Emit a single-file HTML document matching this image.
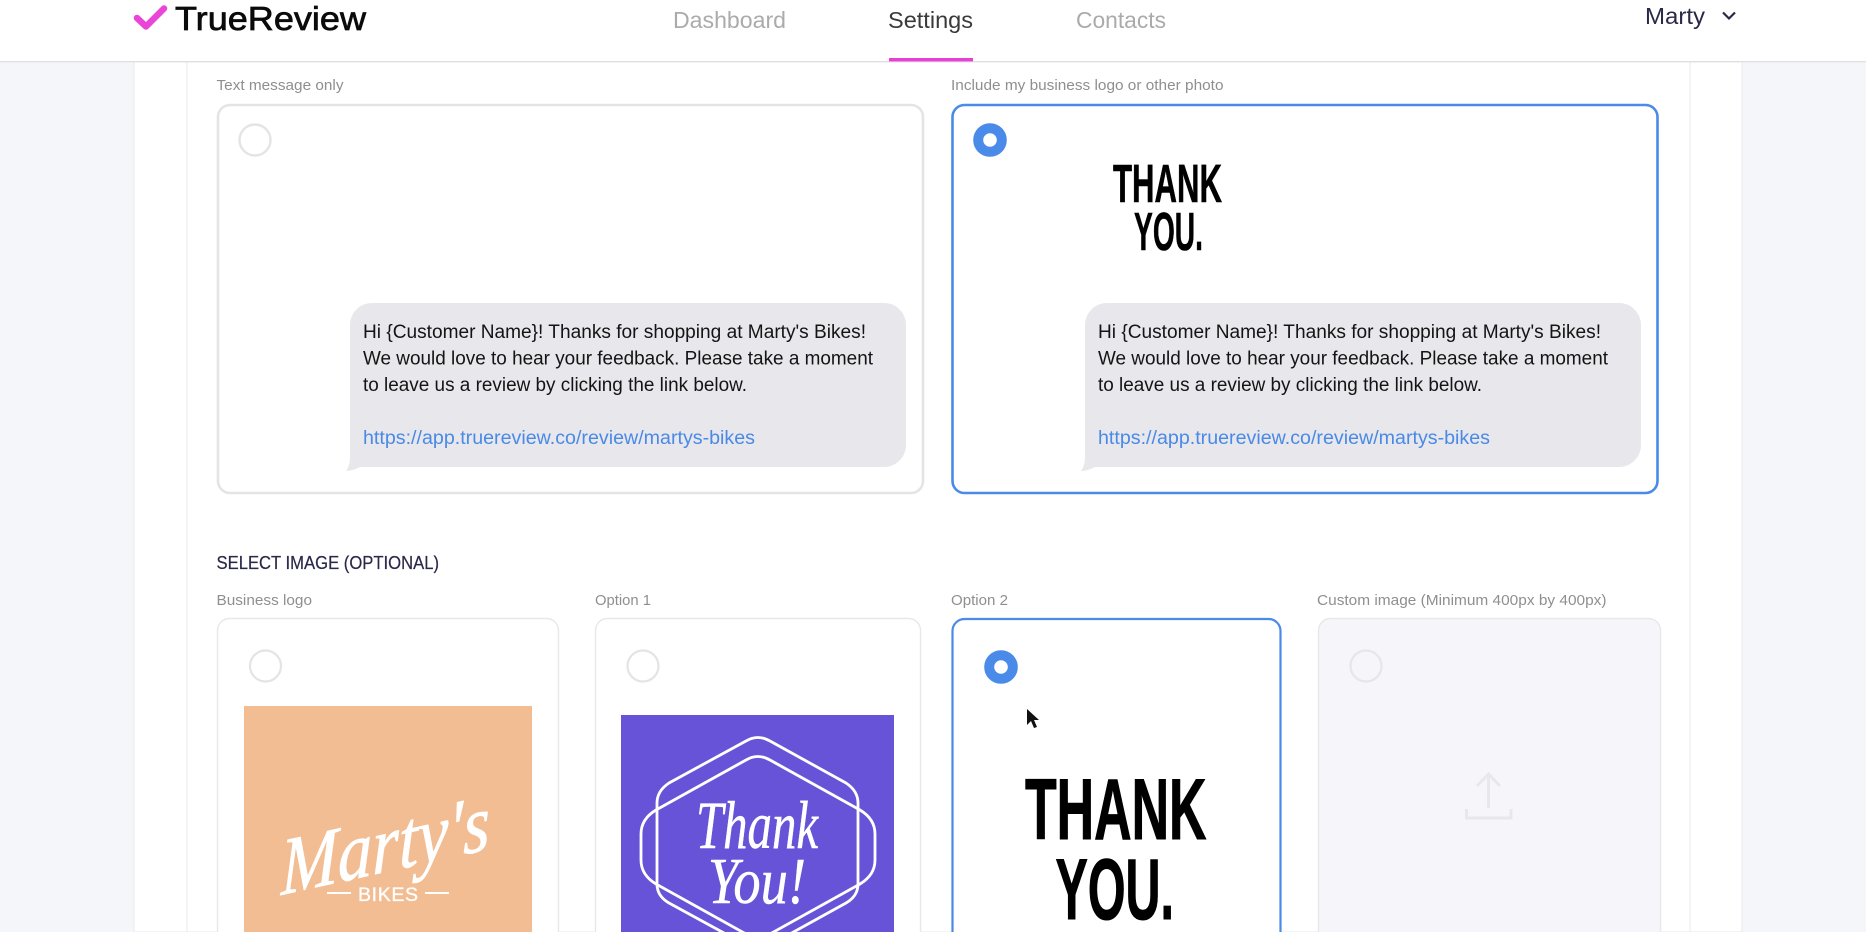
<!DOCTYPE html>
<html lang="en">
<head>
<meta charset="utf-8">
<title>TrueReview Settings</title>
<style>
html,body{margin:0;padding:0;width:1866px;height:932px;overflow:hidden;background:#f5f6fa}
svg{display:block;position:absolute;left:0;top:0;font-family:"Liberation Sans",sans-serif;filter:blur(.3px)}
</style>
</head>
<body>
<svg width="1866" height="932" viewBox="0 0 1866 932" xmlns="http://www.w3.org/2000/svg">
  <rect width="1866" height="932" fill="#f5f6fa"/>
  <rect x="134" y="62" width="1608" height="870" fill="#fff" stroke="#e9e9ee" stroke-width="1"/>
  <line x1="187" y1="62" x2="187" y2="932" stroke="#ececf0" stroke-width="1.2"/>
  <line x1="1690" y1="62" x2="1690" y2="932" stroke="#ececf0" stroke-width="1.2"/>

  <!-- header -->
  <rect width="1866" height="61" fill="#fff"/>
  <rect y="61" width="1866" height="1.2" fill="#dfdfe2"/>
  <path d="M137 18 L146 26.5 L164 8.5" fill="none" stroke="#e946d8" stroke-width="6.5" stroke-linecap="round" stroke-linejoin="round"/>
  <text x="175" y="30" font-size="33.5" fill="#0b0b0b" stroke="#0b0b0b" stroke-width=".7" textLength="191" lengthAdjust="spacingAndGlyphs">TrueReview</text>
  <text x="673" y="28" font-size="23" fill="#ababab" textLength="113" lengthAdjust="spacingAndGlyphs">Dashboard</text>
  <text x="888" y="28" font-size="23" fill="#3a3a3a" textLength="85" lengthAdjust="spacingAndGlyphs">Settings</text>
  <text x="1076" y="28" font-size="23" fill="#ababab" textLength="90" lengthAdjust="spacingAndGlyphs">Contacts</text>
  <rect x="889" y="58" width="84" height="3.4" fill="#e63fd2"/>
  <text x="1645" y="24" font-size="23" fill="#2a2848" textLength="60" lengthAdjust="spacingAndGlyphs">Marty</text>
  <path d="M1723 12.5 L1729 18.5 L1735 12.5" fill="none" stroke="#2a2848" stroke-width="2.2"/>

  <!-- message type labels -->
  <text x="216.5" y="90" font-size="14.5" fill="#8f8f8f" textLength="127" lengthAdjust="spacingAndGlyphs">Text message only</text>
  <text x="951" y="90" font-size="14.5" fill="#8f8f8f" textLength="272.5" lengthAdjust="spacingAndGlyphs">Include my business logo or other photo</text>

  <!-- card 1 -->
  <rect x="218" y="105" width="705" height="388" rx="12" fill="#fff" stroke="#e4e4e6" stroke-width="2.6"/>
  <circle cx="255" cy="140" r="15.5" fill="#fff" stroke="#e4e4e6" stroke-width="2.4"/>
  <path d="M372 303 H884 a22 22 0 0 1 22 22 V445 a22 22 0 0 1 -22 22 H360 C356 469 351 471 346 471 C349 467 350 462 350 456 V325 a22 22 0 0 1 22 -22 Z" fill="#e7e7ec"/>
  <text x="363" y="338" font-size="19" fill="#141414" textLength="503" lengthAdjust="spacingAndGlyphs">Hi {Customer Name}! Thanks for shopping at Marty's Bikes!</text>
  <text x="363" y="364.5" font-size="19" fill="#141414" textLength="510" lengthAdjust="spacingAndGlyphs">We would love to hear your feedback. Please take a moment</text>
  <text x="363" y="391" font-size="19" fill="#141414" textLength="384" lengthAdjust="spacingAndGlyphs">to leave us a review by clicking the link below.</text>
  <text x="363" y="444" font-size="19" fill="#4a8ae6" textLength="392" lengthAdjust="spacingAndGlyphs">https://app.truereview.co/review/martys-bikes</text>

  <!-- card 2 -->
  <rect x="952.5" y="105" width="705" height="388" rx="12" fill="#fff" stroke="#4a8ae8" stroke-width="2.6"/>
  <circle cx="990" cy="140" r="11.8" fill="#fff" stroke="#4a8ae8" stroke-width="10"/>
  <text x="1113" y="202" font-family="'Liberation Sans Narrow','Liberation Sans',sans-serif" font-size="54" font-weight="700" fill="#000" stroke="#000" stroke-width=".6" textLength="109" lengthAdjust="spacingAndGlyphs">THANK</text>
  <text x="1134" y="250" font-family="'Liberation Sans Narrow','Liberation Sans',sans-serif" font-size="54" font-weight="700" fill="#000" stroke="#000" stroke-width=".6" textLength="69" lengthAdjust="spacingAndGlyphs">YOU.</text>
  <path d="M1107 303 H1619 a22 22 0 0 1 22 22 V445 a22 22 0 0 1 -22 22 H1095 C1091 469 1086 471 1081 471 C1084 467 1085 462 1085 456 V325 a22 22 0 0 1 22 -22 Z" fill="#e7e7ec"/>
  <text x="1098" y="338" font-size="19" fill="#141414" textLength="503" lengthAdjust="spacingAndGlyphs">Hi {Customer Name}! Thanks for shopping at Marty's Bikes!</text>
  <text x="1098" y="364.5" font-size="19" fill="#141414" textLength="510" lengthAdjust="spacingAndGlyphs">We would love to hear your feedback. Please take a moment</text>
  <text x="1098" y="391" font-size="19" fill="#141414" textLength="384" lengthAdjust="spacingAndGlyphs">to leave us a review by clicking the link below.</text>
  <text x="1098" y="444" font-size="19" fill="#4a8ae6" textLength="392" lengthAdjust="spacingAndGlyphs">https://app.truereview.co/review/martys-bikes</text>

  <!-- select image -->
  <text x="216.5" y="569" font-size="18" fill="#2a2848" stroke="#2a2848" stroke-width=".2" textLength="222.5" lengthAdjust="spacingAndGlyphs">SELECT IMAGE (OPTIONAL)</text>
  <text x="216.5" y="605" font-size="14.5" fill="#8f8f8f" textLength="95.5" lengthAdjust="spacingAndGlyphs">Business logo</text>
  <text x="595" y="605" font-size="14.5" fill="#8f8f8f" textLength="56" lengthAdjust="spacingAndGlyphs">Option 1</text>
  <text x="951" y="605" font-size="14.5" fill="#8f8f8f" textLength="57" lengthAdjust="spacingAndGlyphs">Option 2</text>
  <text x="1317" y="605" font-size="14.5" fill="#8f8f8f" textLength="289.5" lengthAdjust="spacingAndGlyphs">Custom image (Minimum 400px by 400px)</text>

  <!-- business logo card -->
  <rect x="217.5" y="618.5" width="341" height="340" rx="12" fill="#fff" stroke="#e8e8ea" stroke-width="1.4"/>
  <circle cx="265.5" cy="666" r="15.5" fill="#fff" stroke="#e4e4e6" stroke-width="2.2"/>
  <rect x="244" y="706" width="288" height="226" fill="#f2bd92"/>
  <text transform="translate(281 895) rotate(-12.5) skewX(-12)" font-family="'Liberation Serif',serif" font-style="italic" font-size="80" fill="#fff" stroke="#fff" stroke-width=".8" textLength="214" lengthAdjust="spacingAndGlyphs">Marty's</text>
  <rect x="327" y="892" width="24" height="2" fill="#fff"/>
  <rect x="425" y="892" width="24" height="2" fill="#fff"/>
  <text x="358" y="901" font-family="'Liberation Sans Narrow','Liberation Sans',sans-serif" font-size="19.5" fill="#fff" stroke="#fff" stroke-width=".3" textLength="60" lengthAdjust="spacing">BIKES</text>

  <!-- option 1 card -->
  <rect x="595.5" y="618.5" width="325" height="340" rx="12" fill="#fff" stroke="#e8e8ea" stroke-width="1.4"/>
  <circle cx="643" cy="666" r="15.5" fill="#fff" stroke="#e4e4e6" stroke-width="2.2"/>
  <rect x="621" y="715" width="273" height="217" fill="#6753d7"/>
  <g fill="none" stroke="#fff" stroke-width="2.8" stroke-linejoin="round">
    <path d="M746 741 Q757.7 734 770 741 L846 783 Q858 791 858 803 V884 Q858 896 846 903 L770 945 Q757.7 952 746 945 L669 903 Q657 896 657 884 V803 Q657 791 669 783 Z"/>
    <path d="M746 760 Q757.7 753 770 760 L860 810 Q875 819 875 834 V860 Q875 875 860 884 L770 934 Q757.7 941 746 934 L656 884 Q641 875 641 860 V834 Q641 819 656 810 Z"/>
  </g>
  <rect x="621" y="932" width="273" height="20" fill="#fff"/>
  <text x="696" y="848" font-family="'Liberation Serif',serif" font-style="italic" font-size="68" fill="#fff" stroke="#fff" stroke-width=".5" textLength="122" lengthAdjust="spacingAndGlyphs">Thank</text>
  <text x="708" y="903" font-family="'Liberation Serif',serif" font-style="italic" font-size="66" fill="#fff" stroke="#fff" stroke-width=".5" textLength="98" lengthAdjust="spacingAndGlyphs">You!</text>

  <!-- option 2 card -->
  <rect x="952.5" y="619" width="328" height="340" rx="12" fill="#fff" stroke="#4a8ae8" stroke-width="2.2"/>
  <circle cx="1001" cy="667" r="11.8" fill="#fff" stroke="#4a8ae8" stroke-width="10"/>
  <path d="M1027 709 L1027 725 L1031 721 L1034 728 L1037 727 L1034 720 L1039 720 Z" fill="#111"/>
  <text x="1025" y="839" font-family="'Liberation Sans Narrow','Liberation Sans',sans-serif" font-size="86" font-weight="700" fill="#000" stroke="#000" stroke-width="1" textLength="181.5" lengthAdjust="spacingAndGlyphs">THANK</text>
  <text x="1055.5" y="919" font-family="'Liberation Sans Narrow','Liberation Sans',sans-serif" font-size="86" font-weight="700" fill="#000" stroke="#000" stroke-width="1" textLength="118.5" lengthAdjust="spacingAndGlyphs">YOU.</text>

  <!-- custom card -->
  <rect x="1318.5" y="618.5" width="342" height="340" rx="12" fill="#f6f6fa" stroke="#e8e8ec" stroke-width="1.4"/>
  <circle cx="1366" cy="666" r="15.5" fill="none" stroke="#e6e6e8" stroke-width="2.2"/>
  <g fill="none" stroke="#e8e8ec" stroke-width="3">
    <path d="M1488.5 808 V774 M1477 786 L1488.5 774 L1500 786"/>
    <path d="M1466.5 809 V818 H1511 V809"/>
  </g>
</svg>
</body>
</html>
